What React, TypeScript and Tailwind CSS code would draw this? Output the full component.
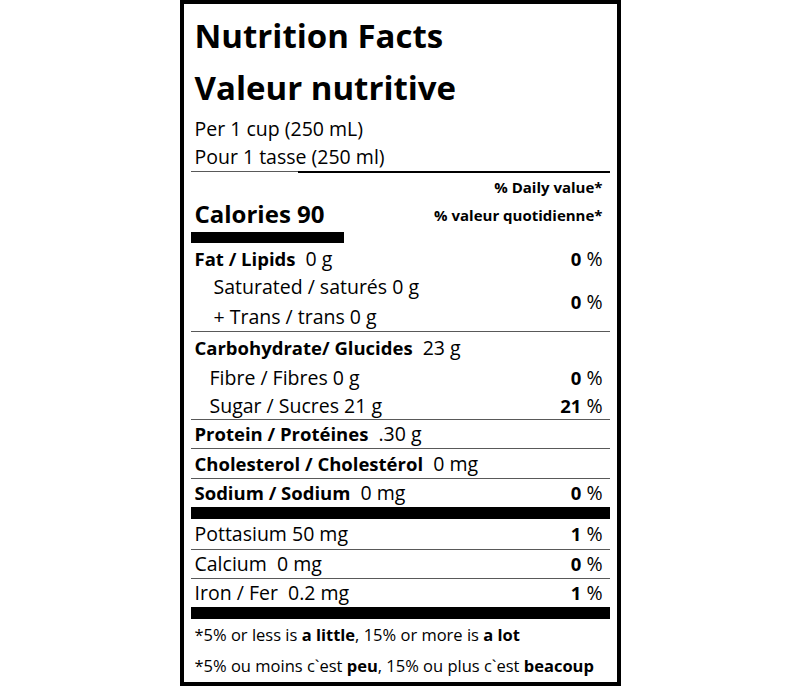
import React from 'react';

const Thin = () => <div className="h-px bg-[#595959]" />;
const Thick = () => <div className="h-[12px] bg-black" />;

const B = ({ children }: { children: React.ReactNode }) => (
  <span className="font-bold text-[18.5px]">{children}</span>
);

const Pct = ({ v }: { v: string }) => (
  <span className="whitespace-pre">
    <B>{v}</B> %
  </span>
);

type RowProps = {
  h: string;
  children: React.ReactNode;
  pct?: string;
  indent?: string;
};

const Row = ({ h, children, pct, indent = 'pl-[4px]' }: RowProps) => (
  <div className={`flex items-center justify-between pr-[7px] whitespace-pre ${h} ${indent}`}>
    <div>{children}</div>
    {pct && <Pct v={pct} />}
  </div>
);

const App = () => {
  return (
    <div className="min-h-screen bg-white flex justify-center">
      <div className="w-[441px] h-[686px] border-[4px] border-black px-[7px] pt-[6px] flex flex-col text-black text-[19.5px] leading-none font-['Open_Sans',sans-serif]">
        {/* Title */}
        <div className="pl-[4px] font-bold text-[33px] leading-[52px] h-[52px]">Nutrition Facts</div>
        <div className="pl-[4px] font-bold text-[33px] leading-[52px] h-[52px]">Valeur nutritive</div>

        {/* Serving size */}
        <Row h="h-[29px]">Per 1 cup (250 mL)</Row>
        <Row h="h-[28px]">Pour 1 tasse (250 ml)</Row>
        <div className="flex items-start h-[2px]">
          <div className="w-[107px] h-px bg-[#595959]" />
          <div className="flex-1 h-[2px] bg-black" />
        </div>

        {/* Calories */}
        <div className="h-[28px] flex items-center justify-end pr-[7px] font-bold text-[15px]">% Daily value*</div>
        <div className="h-[29px] flex items-center justify-between pl-[4px] pr-[7px]">
          <span className="font-bold text-[24px] pb-[4px]">Calories 90</span>
          <span className="font-bold text-[15px]">% valeur quotidienne*</span>
        </div>
        <div className="py-[2px]">
          <div className="w-[153px] h-[11px] bg-black" />
        </div>

        {/* Nutrients */}
        <Row h="h-[27px]" pct="0">
          <B>Fat / Lipids</B>  0 g
        </Row>
        <div className="flex items-center justify-between pr-[7px]">
          <div className="pl-[23px]">
            <div className="h-[30px] flex items-center">Saturated / saturés 0 g</div>
            <div className="h-[29px] flex items-center">+ Trans / trans 0 g</div>
          </div>
          <Pct v="0" />
        </div>
        <Thin />
        <Row h="h-[31px]">
          <B>Carbohydrate/ Glucides</B>  23 g
        </Row>
        <Row h="h-[29px]" indent="pl-[19px]" pct="0">Fibre / Fibres 0 g</Row>
        <Row h="h-[27px]" indent="pl-[19px]" pct="21">Sugar / Sucres 21 g</Row>
        <Thin />
        <Row h="h-[28px]">
          <B>Protein / Protéines</B>  .30 g
        </Row>
        <Thin />
        <Row h="h-[29px]">
          <B>Cholesterol / Cholestérol</B>  0 mg
        </Row>
        <Thin />
        <Row h="h-[28px]" pct="0">
          <B>Sodium / Sodium</B>  0 mg
        </Row>
        <Thick />

        {/* Minerals */}
        <Row h="h-[30px]" pct="1">Pottasium 50 mg</Row>
        <Thin />
        <Row h="h-[28px]" pct="0">Calcium  0 mg</Row>
        <Thin />
        <Row h="h-[28px]" pct="1">Iron / Fer  0.2 mg</Row>
        <Thick />

        {/* Footnote */}
        <div className="h-[32px] flex items-center pl-[4px] text-[16.5px]">
          <span>
            *5% or less is <span className="font-bold">a little</span>, 15% or more is <span className="font-bold">a lot</span>
          </span>
        </div>
        <div className="h-[30px] flex items-center pl-[4px] text-[16.5px]">
          <span>
            *5% ou moins c`est <span className="font-bold">peu</span>, 15% ou plus c`est <span className="font-bold">beacoup</span>
          </span>
        </div>
      </div>
    </div>
  );
};

export default App;
